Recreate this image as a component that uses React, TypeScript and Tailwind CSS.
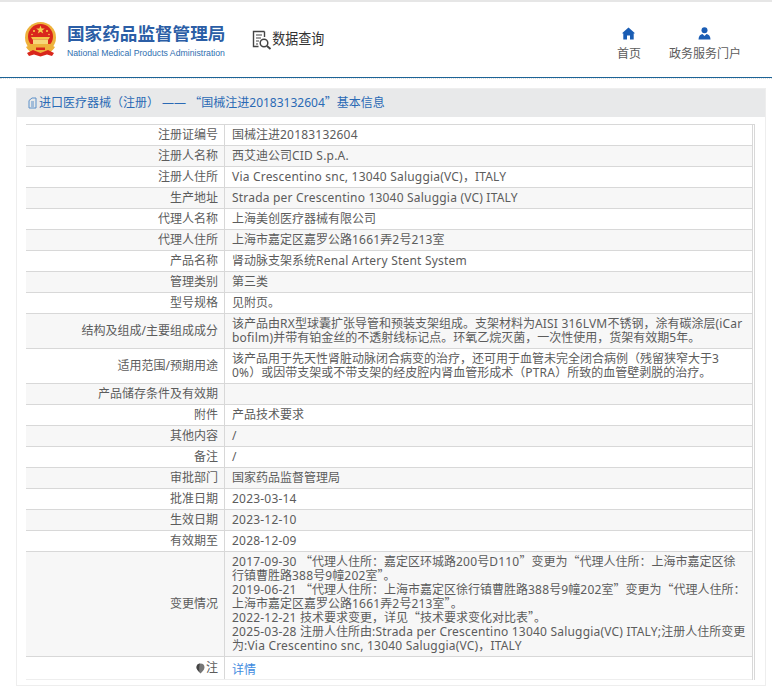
const rows: { label: string; lines: string[] }[] = [
  { label: "注册证编号", lines: ["国械注进20183132604"] },
  { label: "注册人名称", lines: ["西艾迪公司CID S.p.A."] },
  { label: "注册人住所", lines: ["Via Crescentino snc, 13040 Saluggia(VC)，ITALY"] },
  { label: "生产地址", lines: ["Strada per Crescentino 13040 Saluggia (VC) ITALY"] },
  { label: "代理人名称", lines: ["上海美创医疗器械有限公司"] },
  { label: "代理人住所", lines: ["上海市嘉定区嘉罗公路1661弄2号213室"] },
  { label: "产品名称", lines: ["肾动脉支架系统Renal Artery Stent System"] },
  { label: "管理类别", lines: ["第三类"] },
  { label: "型号规格", lines: ["见附页。"] },
  {
    label: "结构及组成/主要组成成分",
    lines: [
      "该产品由RX型球囊扩张导管和预装支架组成。支架材料为AISI 316LVM不锈钢，涂有碳涂层(iCar",
      "bofilm)并带有铂金丝的不透射线标记点。环氧乙烷灭菌，一次性使用，货架有效期5年。",
    ],
  },
  {
    label: "适用范围/预期用途",
    lines: [
      "该产品用于先天性肾脏动脉闭合病变的治疗，还可用于血管未完全闭合病例（残留狭窄大于3",
      "0%）或因带支架或不带支架的经皮腔内肾血管形成术（PTRA）所致的血管壁剥脱的治疗。",
    ],
  },
  { label: "产品储存条件及有效期", lines: [""] },
  { label: "附件", lines: ["产品技术要求"] },
  { label: "其他内容", lines: ["/"] },
  { label: "备注", lines: ["/"] },
  { label: "审批部门", lines: ["国家药品监督管理局"] },
  { label: "批准日期", lines: ["2023-03-14"] },
  { label: "生效日期", lines: ["2023-12-10"] },
  { label: "有效期至", lines: ["2028-12-09"] },
  {
    label: "变更情况",
    lines: [
      "2017-09-30 “代理人住所：嘉定区环城路200号D110”变更为“代理人住所：上海市嘉定区徐",
      "行镇曹胜路388号9幢202室”。",
      "2019-06-21 “代理人住所：上海市嘉定区徐行镇曹胜路388号9幢202室”变更为“代理人住所：",
      "上海市嘉定区嘉罗公路1661弄2号213室”。",
      "2022-12-21 技术要求变更，详见“技术要求变化对比表”。",
      "2025-03-28 注册人住所由:Strada per Crescentino 13040 Saluggia(VC) ITALY;注册人住所变更",
      "为:Via Crescentino snc, 13040 Saluggia(VC)，ITALY",
    ],
  },
]

function Quote({ children }: { children: string }) {
  return <span className="font-['Noto_Sans_CJK_SC',sans-serif] leading-[0]">{children}</span>
}

// latin runs are a bit wider in the original, quotes are full width
function Mixed({ text }: { text: string }) {
  const parts = text.split(/([\x20-\x7e]+|[“”])/).filter(Boolean)
  return (
    <>
      {parts.map((part, i) =>
        part === "“" || part === "”" ? (
          <Quote key={i}>{part}</Quote>
        ) : /^[\x20-\x7e]/.test(part) ? (
          <span key={i} className="tracking-[0.2px]">
            {part}
          </span>
        ) : (
          <span key={i}>{part}</span>
        ),
      )}
    </>
  )
}

function Emblem() {
  return (
    <svg width="33" height="35" viewBox="0 0 33 35" className="shrink-0">
      <circle cx="16.5" cy="15.5" r="15.5" fill="#eeb23c" />
      <circle cx="16.5" cy="14.5" r="12.5" fill="#d9261c" />
      <polygon points="16.5,3.5 17.6,6.6 20.8,6.6 18.2,8.5 19.2,11.6 16.5,9.7 13.8,11.6 14.8,8.5 12.2,6.6 15.4,6.6" fill="#f6d04a" />
      <circle cx="10" cy="9" r="1" fill="#f6d04a" />
      <circle cx="23" cy="9" r="1" fill="#f6d04a" />
      <circle cx="8" cy="12.5" r="0.8" fill="#f6d04a" />
      <circle cx="25" cy="12.5" r="0.8" fill="#f6d04a" />
      <path d="M7 15h19l-1.5 2.5H8.500z" fill="#f3c64a" />
      <rect x="9" y="17.5" width="15" height="5" fill="#f6d77a" />
      <path d="M4 22h25l-1 2.500H5z" fill="#eeb23c" />
      <path d="M2 25c3 5 8 8 14.500 8s11.500-3 14.500-8l-3-1.500H5z" fill="#eeb23c" />
      <path d="M3 31l6-3 7.500 3 7.500-3 6 3-2 3-5-1.500-6.500 2-6.500-2-5 1.500z" fill="#d9261c" />
      <path d="M12 25.500h9v2.500h-9z" fill="#d9261c" />
    </svg>
  )
}

function QueryIcon() {
  return (
    <svg width="20" height="20" viewBox="0 0 20 20" fill="none" stroke="#444" className="shrink-0">
      <path d="M12.500 1.500H1.500v15h5" strokeWidth="1.400" />
      <path d="M12.500 1.500V7" strokeWidth="1.400" />
      <path d="M4 5h6M4 8h5M4 11h3M4 14h2" strokeWidth="1.200" />
      <circle cx="12" cy="13" r="3.800" strokeWidth="1.500" />
      <path d="M15 16l3.500 3" strokeWidth="2" />
    </svg>
  )
}

export default function App() {
  return (
    <div className="min-h-[698px] bg-white font-['Noto_Sans','Noto_Sans_CJK_SC',sans-serif] text-[12px] text-[#5c5c5c]">
      <div className="h-[2px] bg-[#e6e6e6]" />
      <header className="flex h-[76px] items-center border-b border-[#1c6396] pl-[24px]">
        <Emblem />
        <div className="ml-[10px] flex flex-col">
          <span className="text-[17.600px] leading-[24px] font-bold text-[#2b5ea6]">国家药品监督管理局</span>
          <span className="mt-[2px] font-['Liberation_Sans',sans-serif] text-[8.700px] leading-[12px] whitespace-nowrap text-[#2f6fb0]">
            National Medical Products Administration
          </span>
        </div>
        <div className="ml-[27px] flex items-center">
          <QueryIcon />
          <span className="mt-[1px] text-[13px] text-[#333] scale-y-110">数据查询</span>
        </div>
        <nav className="mr-[31px] ml-auto flex items-start gap-[28px] pt-[10px]">
          <div className="flex flex-col items-center gap-[5px]">
            <svg width="13" height="13" viewBox="0 0 13 13" fill="#1a5db4">
              <path d="M6.500 0.500L13 6.300 11.700 6.500V12.500H8V8.500H5V12.500H1.300V6.500L0 6.300z" />
            </svg>
            <span className="leading-[18px]">首页</span>
          </div>
          <div className="flex flex-col items-center gap-[5px]">
            <svg width="13" height="13" viewBox="0 0 13 13" fill="#1a5db4">
              <circle cx="6.500" cy="3.300" r="3" />
              <path d="M0.500 12.500C0.500 9 2.500 7.300 4.500 7L6.500 9 8.500 7C10.500 7.300 12.500 9 12.500 12.500z" />
            </svg>
            <span className="leading-[18px]">政务服务门户</span>
          </div>
        </nav>
      </header>
      <div className="h-[1px] border-b border-dotted border-[#ddd]" />

      <section className="mt-[9px] ml-[16px] h-[598px] w-[750px] border border-[#eee]">
        <div className="flex h-[28px] items-center bg-[#e8e9ea] pl-[10px] whitespace-nowrap text-[#2a6ab5]">
          <svg width="11" height="12" viewBox="0 0 11 12" fill="none" stroke="#5a8fc8" className="mr-[1px] shrink-0">
            <path d="M2 11V3.500L5 1h4v10zM4 5h3M4 7h3M4 9h3" />
          </svg>
          <span>
            进口医疗器械（注册） —— <Quote>“</Quote>国械注进20183132604<Quote>”</Quote>基本信息
          </span>
        </div>
        <div className="ml-[9px] pt-[7px]">
          <div className="w-[729px] border-t border-r-[3px] border-[#d8d8d8] [border-right-style:double]">
            {rows.map((row, i) => (
              <div key={row.label} className={`flex border-b border-[#d8d8d8] ${i % 2 === 1 ? "bg-[#f7f7f7]" : "bg-white"}`}>
                <div className="flex w-[199px] shrink-0 items-center justify-end border-r border-[#d8d8d8] pr-[6px] leading-[14px]">
                  {row.label}
                </div>
                <div className="min-h-[20px] flex-1 py-[3px] pl-[7px] leading-[14px] whitespace-nowrap">
                  {row.lines.map((line, j) => (
                    <div key={j}>
                      <Mixed text={line} />
                    </div>
                  ))}
                </div>
              </div>
            ))}
            <div className="flex h-[23px] border-b border-[#eee]">
              <div className="flex w-[199px] shrink-0 items-center justify-end border-r border-[#d8d8d8] pr-[6px]">
                <svg width="9" height="11" viewBox="0 0 9 11" className="mr-[1px]">
                  <path d="M4.500 10.500C3 8.800 0.500 7 0.500 4.500a4 4 0 0 1 8 0C8.500 7 6 8.800 4.500 10.500z" fill="#777" />
                  <path d="M4 0.500a4 4 0 0 0-3.500 4C0.500 6 2 7.500 3.500 9 3 6 3 3 4 0.500z" fill="#444" />
                </svg>
                注
              </div>
              <div className="flex-1 pt-[6px] pl-[7px] leading-[14px] text-[#3f8be0]">详情</div>
            </div>
          </div>
        </div>
      </section>
    </div>
  )
}
